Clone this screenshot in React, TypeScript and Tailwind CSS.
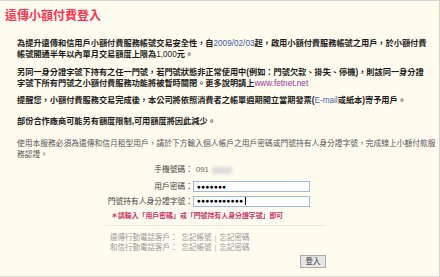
import { FunctionComponent } from "react";

const forgotRows = ["遠傳行動電話客戶：", "和信行動電話客戶："];

const FakeInput: FunctionComponent<{ dots: number; caret?: boolean }> = ({
  dots,
  caret,
}) => (
  <div className="flex h-[11px] w-[117px] items-center border border-[#9fbbe0] bg-white pl-[3px]">
    <span className="text-[6.5px] leading-[6px] tracking-[0.3px] text-black">
      {"●".repeat(dots)}
    </span>
    {caret && <span className="ml-[1px] h-[8px] w-[1px] bg-black" />}
  </div>
);

const App: FunctionComponent = () => {
  return (
    <div className="h-[277px] w-[440px] overflow-hidden border-t border-r border-b border-[#d6d6d6] bg-[#fffbef] font-['Liberation_Sans','Noto_Sans_CJK_TC',sans-serif]">
      {/* title */}
      <div className="pl-[5px] pt-[6px]">
        <h1 className="text-[12px] leading-[18px] font-bold text-[#ff3344] [text-shadow:0_0_2px_#fff,1px_1px_0_#fff,-1px_-1px_0_#fff,1px_-1px_0_#fff,-1px_1px_0_#fff]">
          遠傳小額付費登入
        </h1>
      </div>

      {/* notices */}
      <div className="pl-[17px] whitespace-nowrap text-[8.2px] leading-[11px] font-bold text-[#1a1a1a]">
        <p className="mt-[13px]">
          為提升遠傳和信用戶小額付費服務帳號交易安全性，自
          <span className="font-normal text-[#3d5a9a]">2009/02/03</span>
          起，啟用小額付費服務帳號之用戶，於小額付費
          <br />
          帳號開通半年以內單月交易額度上限為<span className="font-normal">1,000</span>元。
        </p>
        <p className="mt-[7px]">
          另同一身分證字號下持有之任一門號，若門號狀態非正常使用中(例如：門號欠款、掛失、停機)，則該同一身分證
          <br />
          字號下所有門號之小額付費服務功能將被暫時關閉。更多說明請上
          <span className="font-normal text-[#993399]">www.fetnet.net</span>
        </p>
        <p className="mt-[6px]">
          提醒您，小額付費服務交易完成後，本公司將依照消費者之帳單週期開立當期發票(
          <span className="font-normal text-[#4a6aa8]">E-mail</span>
          或紙本)寄予用戶。
        </p>
        <p className="mt-[10px]">部份合作廠商可能另有額度限制,可用額度將因此減少。</p>
        <p className="mt-[11px] text-[7.75px] font-normal text-[#555]">
          使用本服務必須為遠傳和信月租型用戶，請於下方輸入個人帳戶之用戶密碼或門號持有人身分證字號，完成線上小額付款服
          <br />
          務認證。
        </p>
      </div>

      {/* form */}
      <div className="ml-[105px] w-[221px] text-[7.75px] text-[#444]">
        <div className="mt-[4px] flex h-[12px] items-center">
          <span className="w-[88px] text-right">手機號碼：</span>
          <span className="ml-[3px] text-[#666]">091</span>
          <span className="ml-[3px] h-[7px] w-[20px] bg-[#ddd] blur-[1.5px]" />
        </div>
        <div className="mt-[5px] flex items-center">
          <span className="w-[88px] text-right">用戶密碼：</span>
          <FakeInput dots={7} />
        </div>
        <div className="mt-[3px] flex items-center">
          <span className="w-[88px] text-right">門號持有人身分證字號：</span>
          <FakeInput dots={11} caret />
        </div>
        <p className="mt-[4px] pl-[6px] text-[6.9px] leading-[10px] font-bold text-[#cc3366]">
          ＊請輸入「用戶密碼」或「門號持有人身分證字號」即可
        </p>
        <div className="mt-[4px] h-px bg-[#efe9da]" />
        <div className="mt-[7px] pl-[5px] text-[7.5px] leading-[10px] text-[#999]">
          {forgotRows.map((row) => (
            <div key={row} className="flex">
              <span>{row}</span>
              <span className="ml-[4px]">忘記帳號</span>
              <span className="mx-[3px] text-[#bbb]">|</span>
              <span>忘記密碼</span>
            </div>
          ))}
        </div>
        <div className="mt-[2px] flex">
          <button className="ml-[195px] flex h-[13px] w-[26px] items-center justify-center border border-[#aaa] bg-[#e6e6e6] text-[7.5px] leading-none text-[#333]">
            登入
          </button>
        </div>
      </div>
    </div>
  );
};

export default App;
